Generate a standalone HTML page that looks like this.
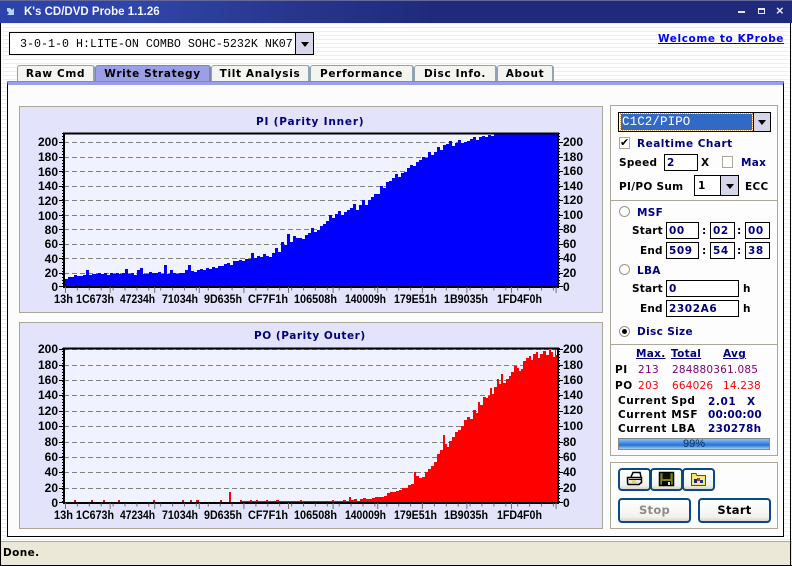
<!DOCTYPE html>
<html><head><meta charset="utf-8"><style>
html,body{margin:0;padding:0;width:792px;height:566px;overflow:hidden;background:#fff}
div,span,a{position:absolute;box-sizing:border-box;white-space:nowrap}
body{font-family:"DejaVu Sans",sans-serif;font-weight:bold;font-size:10.5px;color:#000}
.tab{top:65px;height:16px;background:#f4f4f0;border:1px solid #8ea4b4;border-bottom:0;border-radius:3px 3px 0 0;border-right-width:2px;text-align:center;line-height:16px;letter-spacing:.65px}
.gb{border:1px solid #aca899;background:#fdfdfd}
.n{color:#00007f}
.l{line-height:12px;height:12px}
.inp{background:#fff;border:1px solid #000;color:#00007f;height:17px;line-height:17px;padding-left:2px;letter-spacing:.6px}
.arrow{background:#d5d6ea;border-left:1px solid #000}
.arrow:after{content:"";position:absolute;left:50%;top:50%;margin:-2px 0 0 -4px;border:4px solid transparent;border-top:5px solid #000;border-bottom:0}
.cb{border:1px solid #aca899;background:#fff;width:11px;height:12px}
.rd{width:11px;height:11px;border-radius:50%;border:1px solid #9a9788;background:#fff}
.btn{border:2px solid #0a4a84;border-radius:4px;background:linear-gradient(#fff,#f2f2ec 80%,#d8d6c8);text-align:center}
</style></head><body>
<div style="left:0;top:0;width:792px;height:566px;background:repeating-linear-gradient(#fdfdfd 0 3px,#eeeeee 3px 4px)"></div>
<div style="left:0;top:0;width:792px;height:23px;background:linear-gradient(90deg,#2c42ac 0,#2f45a8 18%,#27358c 38%,#1f2a7c 55%,#1f2a7c 100%);border-top:1px solid #66689a"></div>
<svg style="position:absolute;left:7px;top:7px" width="10" height="10"><path d="M0 1H3L5 3L7 1V8H0L2 6L0 4Z" fill="#b8d4f4"/></svg>
<div style="left:24px;top:4px;color:#f4f6ff;font:bold 11.5px/16px 'Liberation Sans',sans-serif">K's CD/DVD Probe 1.1.26</div>
<div style="left:738px;top:11px;width:7px;height:2px;background:#e8e8f4"></div>
<div style="left:758px;top:8px;width:7px;height:6px;border:1px solid #e8e8f4;border-top-width:2px"></div>
<div style="left:776px;top:3px;color:#e8e8f4;font:bold 13px/16px 'Liberation Sans',sans-serif">×</div>

<div style="left:9px;top:32px;width:305px;height:23px;background:#fff;border:1px solid #000"></div>
<div style="left:20px;top:37px;font:11.67px/14px 'Liberation Mono',monospace;color:#000">3-0-1-0 H:LITE-ON COMBO SOHC-5232K NK07</div>
<div class="arrow" style="left:295px;top:33px;width:18px;height:21px"></div>
<a style="left:658px;top:32px;color:#0000ff;text-decoration:underline;font-size:10.5px;line-height:14px;letter-spacing:.6px">Welcome to KProbe</a>

<div class="tab" style="left:17px;width:78px">Raw Cmd</div>
<div class="tab" style="left:95px;width:116px;background:#9a9fe6;border-color:#7f88a8">Write Strategy</div>
<div class="tab" style="left:211px;width:99px">Tilt Analysis</div>
<div class="tab" style="left:310px;width:104px">Performance</div>
<div class="tab" style="left:414px;width:83px">Disc Info.</div>
<div class="tab" style="left:497px;width:57px">About</div>

<div style="left:7px;top:81px;width:777px;height:456px;background:#fcfcfc;border:1px solid #000;border-top:4px solid #9a9fe6"></div>
<div style="left:8px;top:81px;width:775px;height:1px;background:#7f84d0"></div>

<div style="left:19px;top:106px;width:584px;height:207px;background:#e3e4fb;border:1px solid #aca899;border-bottom-width:1px"></div>
<div style="left:19px;top:322px;width:584px;height:207px;background:#e3e4fb;border:1px solid #aca899"></div>
<div class="n" style="left:256px;top:115px;line-height:15px;letter-spacing:.8px">PI (Parity Inner)</div>
<div class="n" style="left:254px;top:329px;line-height:15px;letter-spacing:.55px">PO (Parity Outer)</div>

<svg style="position:absolute;left:0;top:0" width="792" height="566" font-family="Liberation Sans" font-size="12" fill="#000">
<rect x="64" y="133" width="494" height="154" fill="#f1f2ff"/>
<rect x="64" y="348" width="494" height="155" fill="#f1f2ff"/>
<g stroke="#808080" stroke-dasharray="5 3" fill="none">
<path d="M64 142.5H557M64 157.5H557M64 171.5H557M64 186.5H557M64 200.5H557M64 215.5H557M64 229.5H557M64 244.5H557M64 258.5H557M64 273.5H557"/>
<path d="M64 349.5H557M64 365.5H557M64 380.5H557M64 395.5H557M64 411.5H557M64 426.5H557M64 442.5H557M64 457.5H557M64 472.5H557M64 488.5H557"/>
</g>
<path fill="#0000ff" d="M64 287V279h4V277h3V277h3V275h3V276h3V276h3V275h3V270h3V275h3V274h3V274h3V273h3V274h3V273h3V275h3V273h3V274h3V273h3V274h3V273h3V269h3V274h3V273h3V275h3V270h3V268h3V274h3V274h3V272h3V273h3V273h3V272h3V274h3V265h3V274h3V270h3V273h3V274h3V273h3V273h3V270h3V265h3V271h3V272h3V270h3V269h3V270h3V268h3V269h3V267h3V268h3V266h3V266h3V264h3V263h3V265h3V261h3V261h3V260h3V261h3V259h3V259h3V253h3V258h3V256h3V257h3V254h3V256h3V257h3V253h3V248h3V252h3V242h3V245h3V234h3V242h3V236h3V238h3V238h3V239h3V235h3V233h3V228h3V232h3V230h3V226h3V224h3V221h3V215h3V218h3V214h3V211h3V215h3V212h3V210h3V208h3V204h3V210h3V205h3V200h3V205h3V200h3V197h3V194h3V194h3V186h3V188h3V182h3V181h3V178h3V174h3V177h3V173h3V172h3V168h3V165h3V166h3V162h3V160h3V157h3V158h3V152h3V155h3V152h3V147h3V150h3V145h3V144h3V141h3V146h3V143h3V140h3V143h3V142h3V141h3V139h3V137h3V140h3V137h3V136h3V137h3V135h3V136h3V134h3V133H558V287Z"/>
<path fill="#ff0000" d="M64 503V502H74V500H76V502H91V500H93V502H103V500H105V502H118V500H120V502H153V500H155V502H182V500H184V502H190V500H192V502H196V500H199V502H220V500H222V502H229V492H231V502H240V500H242V501H250V500H252V501H256V500H258V501H266V500H268V501H276V500H279V501H300V500H302V501H332V500H334V501H340V501H343V500H346V501H349V497H351V500H354V499H357V501H360V499H363V498H366V499H369V499H372V498H375V497H378V497H381V497H384V496H387V493H390V492H393V492H396V491H399V490H402V488H405V488H408V485H411V484H414V472H416V476H419V478H422V477H425V472H428V469H431V466H434V462H437V454H440V450H443V435H445V444H447V447H449V441H452V437H455V432H458V430H461V426H464V420H467V417H470V419H473V410H476V413H478V402H480V405H483V397H486V398H488V396H490V388H492V394H494V387H497V379H499V384H501V374H503V383H506V379H509V376H511V372H514V366H517V368H519V371H521V369H523V361H526V358H529V356H531V360H533V354H536V352H538V358H540V354H543V351H546V355H549V350H551V352H553V357H555V349H556V355H558V503Z"/>
<path fill="none" stroke="#000" stroke-width="2" d="M64 133.5H558V287H64ZM64 348.5H558V503H64Z"/>
<g stroke="#000" fill="none">
<path d="M59 142.5H64M59 157.5H64M59 171.5H64M59 186.5H64M59 200.5H64M59 215.5H64M59 229.5H64M59 244.5H64M59 258.5H64M59 273.5H64M59 286.5H64M558 142.5H563M558 157.5H563M558 171.5H563M558 186.5H563M558 200.5H563M558 215.5H563M558 229.5H563M558 244.5H563M558 258.5H563M558 273.5H563M558 286.5H563"/>
<path d="M59 349.5H64M59 365.5H64M59 380.5H64M59 395.5H64M59 411.5H64M59 426.5H64M59 442.5H64M59 457.5H64M59 472.5H64M59 488.5H64M59 502.5H64M558 349.5H563M558 365.5H563M558 380.5H563M558 395.5H563M558 411.5H563M558 426.5H563M558 442.5H563M558 457.5H563M558 472.5H563M558 488.5H563M558 502.5H563"/>
<path stroke-dasharray="1 2" d="M62.5 133V287M62.5 348V503M559.5 133V287M559.5 348V503"/>
</g>
<g fill="none" stroke="#707070">
<path stroke-dasharray="1 10.9" stroke-width="3" d="M65 289H558M65 505H558"/>
<path stroke-dasharray="1 43.6" stroke-width="6" d="M65 290H558M65 506H558"/>
</g>
<g text-anchor="end">
<text x="58" y="146">200</text><text x="58" y="161">180</text><text x="58" y="176">160</text><text x="58" y="190">140</text><text x="58" y="205">120</text><text x="58" y="220">100</text><text x="58" y="234">80</text><text x="58" y="248">60</text><text x="58" y="263">40</text><text x="58" y="277">20</text><text x="58" y="291">0</text>
<text x="58" y="353">200</text><text x="58" y="369">180</text><text x="58" y="384">160</text><text x="58" y="399">140</text><text x="58" y="415">120</text><text x="58" y="430">100</text><text x="58" y="446">80</text><text x="58" y="461">60</text><text x="58" y="476">40</text><text x="58" y="492">20</text><text x="58" y="507">0</text>
</g>
<g>
<text x="563" y="146">200</text><text x="563" y="161">180</text><text x="563" y="175">160</text><text x="563" y="190">140</text><text x="563" y="204">120</text><text x="563" y="219">100</text><text x="563" y="233">80</text><text x="563" y="248">60</text><text x="563" y="262">40</text><text x="563" y="277">20</text><text x="563" y="291">0</text>
<text x="563" y="353">200</text><text x="563" y="369">180</text><text x="563" y="384">160</text><text x="563" y="399">140</text><text x="563" y="414">120</text><text x="563" y="430">100</text><text x="563" y="446">80</text><text x="563" y="461">60</text><text x="563" y="476">40</text><text x="563" y="492">20</text><text x="563" y="507">0</text>
</g>
<g>
<text x="54" y="303" textLength="19" lengthAdjust="spacingAndGlyphs">13h</text><text x="76" y="303" textLength="38" lengthAdjust="spacingAndGlyphs">1C673h</text><text x="120" y="303" textLength="35" lengthAdjust="spacingAndGlyphs">47234h</text><text x="162" y="303" textLength="36" lengthAdjust="spacingAndGlyphs">71034h</text><text x="204" y="303" textLength="38" lengthAdjust="spacingAndGlyphs">9D635h</text><text x="248" y="303" textLength="40" lengthAdjust="spacingAndGlyphs">CF7F1h</text><text x="294" y="303" textLength="43" lengthAdjust="spacingAndGlyphs">106508h</text><text x="345" y="303" textLength="41" lengthAdjust="spacingAndGlyphs">140009h</text><text x="394" y="303" textLength="43" lengthAdjust="spacingAndGlyphs">179E51h</text><text x="444" y="303" textLength="44" lengthAdjust="spacingAndGlyphs">1B9035h</text><text x="497" y="303" textLength="45" lengthAdjust="spacingAndGlyphs">1FD4F0h</text>
</g>
<g>
<text x="54" y="519" textLength="19" lengthAdjust="spacingAndGlyphs">13h</text><text x="76" y="519" textLength="38" lengthAdjust="spacingAndGlyphs">1C673h</text><text x="120" y="519" textLength="35" lengthAdjust="spacingAndGlyphs">47234h</text><text x="162" y="519" textLength="36" lengthAdjust="spacingAndGlyphs">71034h</text><text x="204" y="519" textLength="38" lengthAdjust="spacingAndGlyphs">9D635h</text><text x="248" y="519" textLength="40" lengthAdjust="spacingAndGlyphs">CF7F1h</text><text x="294" y="519" textLength="43" lengthAdjust="spacingAndGlyphs">106508h</text><text x="345" y="519" textLength="41" lengthAdjust="spacingAndGlyphs">140009h</text><text x="394" y="519" textLength="43" lengthAdjust="spacingAndGlyphs">179E51h</text><text x="444" y="519" textLength="44" lengthAdjust="spacingAndGlyphs">1B9035h</text><text x="497" y="519" textLength="45" lengthAdjust="spacingAndGlyphs">1FD4F0h</text>
</g>
</svg>

<div class="gb" style="left:610px;top:105px;width:168px;height:96px"></div>
<div class="gb" style="left:610px;top:200px;width:168px;height:145px"></div>
<div class="gb" style="left:610px;top:344px;width:168px;height:112px"></div>
<div class="gb" style="left:610px;top:462px;width:168px;height:67px"></div>

<div style="left:618px;top:112px;width:153px;height:20px;background:#fff;border:1px solid #000"></div>
<div style="left:621px;top:114px;width:131px;height:16px;background:#316ac5;outline:1px dotted #e0a040;color:#fff;font:12.5px/16px 'Liberation Mono',monospace;padding-left:1px;letter-spacing:.1px">C1C2/PIPO</div>
<div class="arrow" style="left:753px;top:113px;width:17px;height:18px"></div>

<div class="cb" style="left:619px;top:137px"></div>
<div style="left:620px;top:136px;font-size:11px;line-height:13px">✔</div>
<div class="n l" style="left:637px;top:138px;letter-spacing:.5px">Realtime Chart</div>
<div class="l" style="left:619px;top:157px;letter-spacing:.3px">Speed</div>
<div class="inp" style="left:664px;top:154px;width:34px;height:17px">2</div>
<div class="l" style="left:701px;top:157px">X</div>
<div class="cb" style="left:722px;top:156px"></div>
<div class="n l" style="left:741px;top:157px;letter-spacing:.3px">Max</div>
<div class="l" style="left:619px;top:181px;letter-spacing:.3px">PI/PO Sum</div>
<div style="left:694px;top:175px;width:45px;height:21px;background:#fff;border:1px solid #000"></div>
<div class="l" style="left:698px;top:180px">1</div>
<div class="arrow" style="left:720px;top:176px;width:18px;height:19px"></div>
<div class="l" style="left:745px;top:181px;letter-spacing:.3px">ECC</div>

<div class="rd" style="left:619px;top:206px"></div>
<div class="n l" style="left:637px;top:207px;letter-spacing:.3px">MSF</div>
<div class="l" style="left:632px;top:225px;letter-spacing:.2px">Start</div>
<div class="inp" style="left:666px;top:222px;width:33px">00</div>
<div class="l" style="left:702px;top:225px">:</div>
<div class="inp" style="left:710px;top:222px;width:25px">02</div>
<div class="l" style="left:737px;top:225px">:</div>
<div class="inp" style="left:745px;top:222px;width:25px">00</div>
<div class="l" style="left:640px;top:245px;letter-spacing:.2px">End</div>
<div class="inp" style="left:666px;top:242px;width:33px">509</div>
<div class="l" style="left:702px;top:245px">:</div>
<div class="inp" style="left:710px;top:242px;width:25px">54</div>
<div class="l" style="left:737px;top:245px">:</div>
<div class="inp" style="left:745px;top:242px;width:25px">38</div>
<div class="rd" style="left:619px;top:264px"></div>
<div class="n l" style="left:637px;top:265px;letter-spacing:.3px">LBA</div>
<div class="l" style="left:632px;top:283px;letter-spacing:.2px">Start</div>
<div class="inp" style="left:666px;top:280px;width:73px">0</div>
<div class="l" style="left:743px;top:283px">h</div>
<div class="l" style="left:640px;top:303px;letter-spacing:.2px">End</div>
<div class="inp" style="left:666px;top:300px;width:73px">2302A6</div>
<div class="l" style="left:743px;top:303px">h</div>
<div class="rd" style="left:619px;top:326px"></div>
<div style="left:622px;top:329px;width:5px;height:5px;border-radius:50%;background:#000"></div>
<div class="n l" style="left:637px;top:326px;letter-spacing:.35px">Disc Size</div>

<div class="n l" style="left:636px;top:348px;text-decoration:underline;letter-spacing:.3px">Max.</div>
<div class="n l" style="left:671px;top:348px;text-decoration:underline;letter-spacing:.3px">Total</div>
<div class="n l" style="left:723px;top:348px;text-decoration:underline;letter-spacing:.3px">Avg</div>
<div class="l" style="left:615px;top:364px;letter-spacing:.5px">PI</div>
<div class="l" style="left:615px;top:380px;letter-spacing:.5px">PO</div>
<div class="l" style="left:638px;top:364px;color:#800080;font:10.5px/12px 'DejaVu Sans',sans-serif;letter-spacing:.3px">213</div>
<div class="l" style="left:672px;top:364px;color:#800080;font:10.5px/12px 'DejaVu Sans',sans-serif;letter-spacing:.2px">284880361.085</div>
<div class="l" style="left:638px;top:380px;color:#f00;font:10.5px/12px 'DejaVu Sans',sans-serif;letter-spacing:.3px">203</div>
<div class="l" style="left:672px;top:380px;color:#f00;font:10.5px/12px 'DejaVu Sans',sans-serif;letter-spacing:.2px">664026</div>
<div class="l" style="left:723px;top:380px;color:#f00;font:10.5px/12px 'DejaVu Sans',sans-serif;letter-spacing:.2px">14.238</div>
<div class="l" style="left:618px;top:395px;letter-spacing:.55px">Current Spd</div>
<div class="n l" style="left:708px;top:396px;letter-spacing:.6px">2.01</div>
<div class="n l" style="left:747px;top:396px">X</div>
<div class="l" style="left:618px;top:409px;letter-spacing:.55px">Current MSF</div>
<div class="n l" style="left:708px;top:409px;letter-spacing:.2px">00:00:00</div>
<div class="l" style="left:618px;top:423px;letter-spacing:.55px">Current LBA</div>
<div class="n l" style="left:708px;top:423px;letter-spacing:.3px">230278h</div>
<div style="left:618px;top:438px;width:152px;height:12px;border:1px solid #888;background:linear-gradient(#8fc0f0,#3c88e0 45%,#2a70d0 60%,#a4d0f4);text-align:center;font:11px/11px 'Liberation Sans',sans-serif;color:#103060">99%</div>

<div class="btn" style="left:618px;top:468px;width:33px;height:23px"></div>
<div class="btn" style="left:650px;top:468px;width:33px;height:23px"></div>
<div class="btn" style="left:682px;top:468px;width:33px;height:23px"></div>
<svg style="position:absolute;left:618px;top:468px" width="98" height="23">
<path d="M13 9L15 4.500H22L23 9" fill="#fff" stroke="#000" stroke-width="1.500"/>
<path d="M9.500 9.500H23.500V14.500L21 16.500H10L9.500 14.500Z" fill="#e8e8e0" stroke="#000" stroke-width="1.500"/>
<path d="M11 11.500H23" stroke="#000"/><rect x="14" y="12.500" width="4" height="2" fill="#f0d000"/>
<path d="M41.500 4.500H55.500V17.500H41.500Z" fill="#80801c" stroke="#000" stroke-width="1.500"/>
<rect x="44.500" y="5" width="8" height="6" fill="#101000"/><rect x="44" y="13" width="9" height="5" fill="#000"/><rect x="50" y="14" width="2" height="3" fill="#e8e8c0"/>
<path d="M73.500 7.500V5.500H78L79 7.500H87.500V17.500H73.500Z" fill="#f0e868" stroke="#605000"/>
<path d="M75 9H86V16H75Z" fill="#f0ec90"/><rect x="76" y="11" width="3" height="4" fill="#202090"/><rect x="79" y="10" width="3" height="3" fill="#d03030"/><rect x="82" y="12" width="3" height="3" fill="#203090"/>
</svg>
<div class="btn" style="left:618px;top:498px;width:73px;height:25px;color:#8c8c84;line-height:21px;font-size:11.5px;letter-spacing:.3px">Stop</div>
<div class="btn" style="left:698px;top:498px;width:73px;height:25px;line-height:21px;font-size:11.5px;letter-spacing:.3px">Start</div>

<div style="left:0;top:541px;width:792px;height:25px;background:#ebe8d8;border-top:1px solid #aca899;border-bottom:1px solid #000"></div>
<div style="left:3px;top:546px;line-height:14px;letter-spacing:.4px">Done.</div>
<div style="left:0;top:23px;width:1px;height:543px;background:#000"></div>
<div style="left:790px;top:23px;width:1px;height:543px;background:#000"></div>
</body></html>
